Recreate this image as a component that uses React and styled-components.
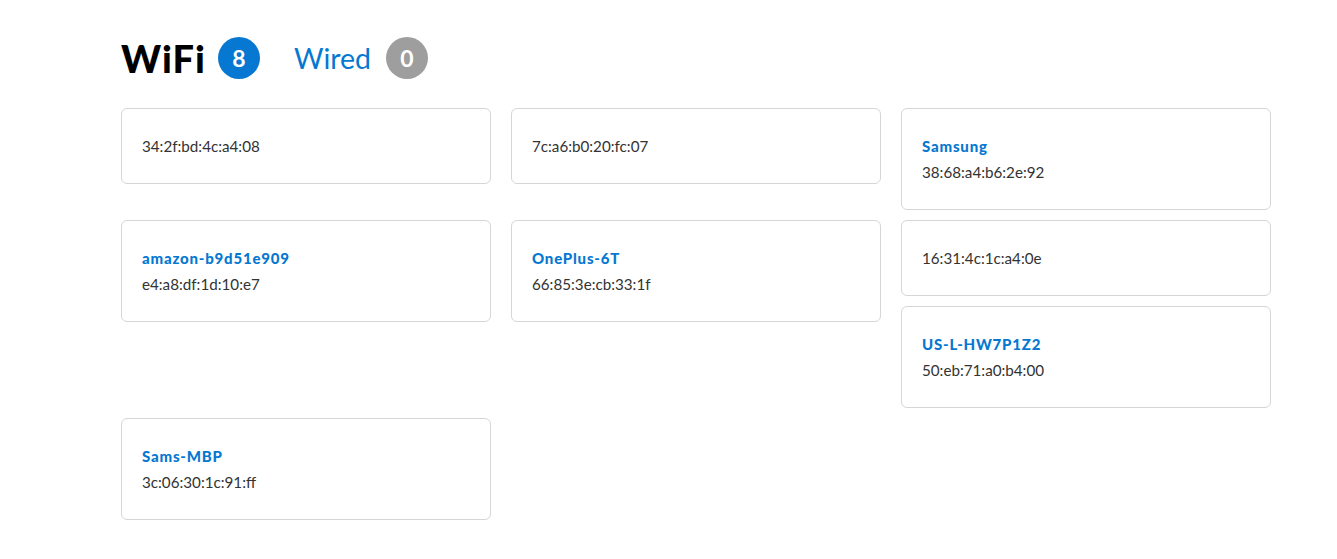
import styled, { createGlobalStyle } from "styled-components"

const GlobalStyle = createGlobalStyle`
    body {
        margin: 0;
        background: #fff;
        font-family: Lato, "Noto Sans", sans-serif;
        color: #333;
    }
`

const Page = styled.div`
    padding: 37px 0 0 121px;
`

const Tabs = styled.div`
    display: flex;
    align-items: center;
    height: 42px;
    margin-bottom: 29px;
`

const Tab = styled.div`
    display: flex;
    align-items: center;
    gap: ${p => (p.active ? "12px" : "15px")};
    margin-right: 34px;
    font-size: ${p => (p.active ? "38px" : "28.5px")};
    font-weight: ${p => (p.active ? 900 : 400)};
    color: ${p => (p.active ? "#000" : "#0678d1")};
    letter-spacing: ${p => (p.active ? "1px" : "0")};
`

const Badge = styled.span`
    display: inline-flex;
    align-items: center;
    justify-content: center;
    width: 42px;
    height: 42px;
    border-radius: 50%;
    background: ${p => p.bg};
    color: #fff;
    font-size: 23px;
    font-weight: 700;
    letter-spacing: 0;
`

const Grid = styled.div`
    display: grid;
    grid-template-columns: repeat(3, 370px);
    column-gap: 20px;
    row-gap: 10px;
    align-items: start;
`

const Stack = styled.div`
    display: flex;
    flex-direction: column;
    gap: 10px;
`

const Card = styled.div`
    box-sizing: border-box;
    width: 370px;
    padding: 24px 20px;
    border: 1px solid #d6d6d6;
    border-radius: 6px;
    background: #fff;
    line-height: 26px;
`

const Name = styled.div`
    font-size: 15px;
    font-weight: 900;
    letter-spacing: 0.8px;
    color: #0678d1;
`

const Mac = styled.div`
    font-size: 15.2px;
    color: #333;
`

function Device({ name, mac }) {
    return (
        <Card>
            {name && <Name>{name}</Name>}
            <Mac>{mac}</Mac>
        </Card>
    )
}

export default function App() {
    return (
        <Page>
            <GlobalStyle />
            <Tabs>
                <Tab active>WiFi <Badge bg="#0678d1">8</Badge></Tab>
                <Tab>Wired <Badge bg="#9e9e9e">0</Badge></Tab>
            </Tabs>
            <Grid>
                <Device mac="34:2f:bd:4c:a4:08" />
                <Device mac="7c:a6:b0:20:fc:07" />
                <Device name="Samsung" mac="38:68:a4:b6:2e:92" />
                <Device name="amazon-b9d51e909" mac="e4:a8:df:1d:10:e7" />
                <Device name="OnePlus-6T" mac="66:85:3e:cb:33:1f" />
                <Stack>
                    <Device mac="16:31:4c:1c:a4:0e" />
                    <Device name="US-L-HW7P1Z2" mac="50:eb:71:a0:b4:00" />
                </Stack>
                <Device name="Sams-MBP" mac="3c:06:30:1c:91:ff" />
            </Grid>
        </Page>
    )
}
